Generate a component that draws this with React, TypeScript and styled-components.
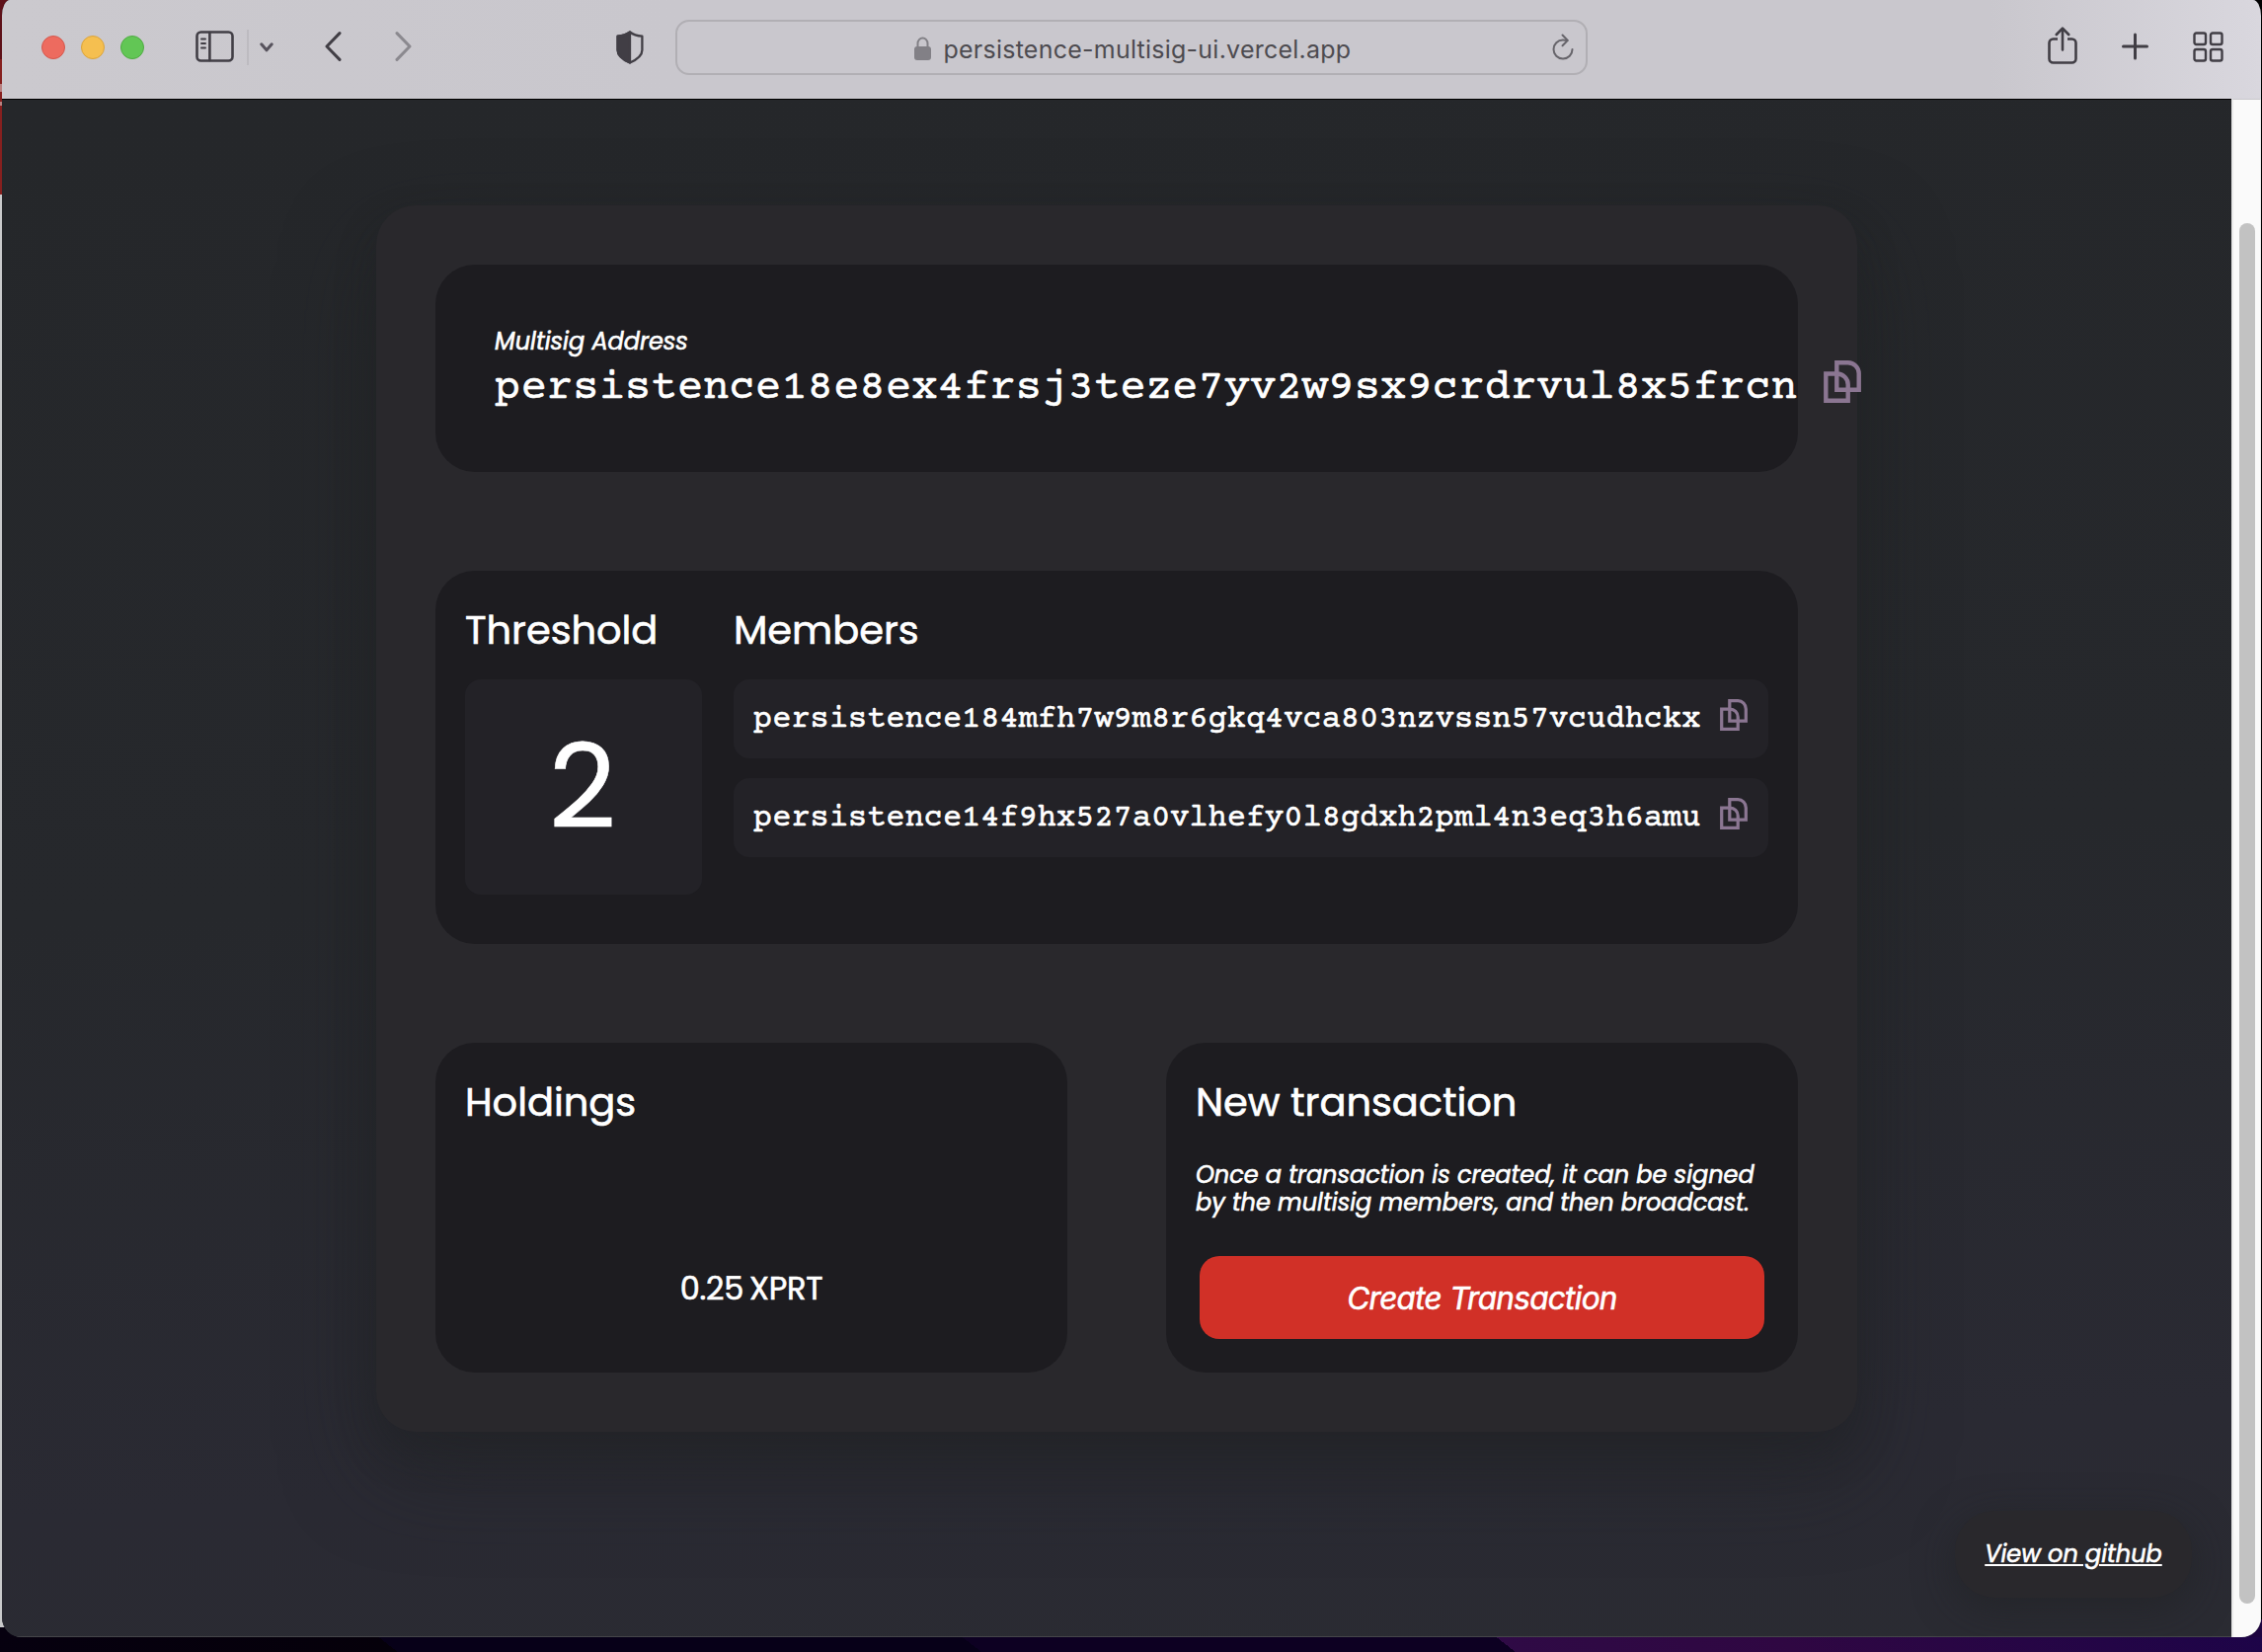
import React from "react";
import styled, { createGlobalStyle } from "styled-components";

const uiFont = `Poppins, Inter, "Open Sans", sans-serif`;
const systemFont = `Inter, Roboto, sans-serif`;
const monoFont = `"Courier Prime", "Liberation Mono", monospace`;

const GlobalStyle = createGlobalStyle`
  * { box-sizing: border-box; }
  body { margin: 0; background: #05000f; }
  h2, p { margin: 0; }
`;

const Desktop = styled.div`
  width: 2291px;
  height: 1673px;
  padding: 0 1px 15px 2px;
  overflow: hidden;
  background:
    linear-gradient(#5e1119 0 60px, #86201f 60px 85px, #b98080 85px 93px, #86201f 93px 103px, #b98080 103px 107px, #86201f 107px 197px, #c9cacb 197px) 0 0 / 20px 1648px no-repeat,
    linear-gradient(#000 0 100%) 100% 0 / 20px 1640px no-repeat,
    linear-gradient(38deg, #06000f 0, #05000a 248px, #070018 248px 612px, #0d0022 612px 945px, #2f0a45 945px, #2f0742 1120px, #1d0448 1422px) 0 100% / 2291px 15px no-repeat,
    linear-gradient(90deg, #06000f 50%, #1d0440 50%);
`;

const Window = styled.div`
  display: flex;
  flex-direction: column;
  height: 1658px;
  overflow: hidden;
  border-radius: 8px 8px 20px 20px / 16px 16px 20px 20px;
  background: #27282e;
`;

const Toolbar = styled.header`
  display: flex;
  align-items: center;
  flex: none;
  height: 100px;
  padding: 0 38px 4px 40px;
  background: linear-gradient(90deg, #cbc9ce 0, #c9c7cd 30%, #c9c7cd 88%, #d9d7de 100%);
`;

const TrafficLights = styled.div`
  display: flex;
  gap: 16px;
`;

const Light = styled.span<{ $fill: string; $edge: string }>`
  width: 24px;
  height: 24px;
  border-radius: 50%;
  border: 1px solid ${(p) => p.$edge};
  background: ${(p) => p.$fill};
`;

const Glyph = styled.svg<{ $before?: number; $lift?: number; $tone?: string }>`
  display: block;
  flex: none;
  margin-left: ${(p) => p.$before ?? 0}px;
  margin-bottom: ${(p) => p.$lift ?? 0}px;
  color: ${(p) => p.$tone ?? "#413e45"};
  fill: none;
  stroke: currentColor;
  stroke-linecap: round;
  stroke-linejoin: round;
`;

const Divider = styled.span`
  width: 2px;
  height: 36px;
  margin-left: 13px;
  background: #bdbbc0;
`;

const AddressBar = styled.div`
  display: flex;
  align-items: center;
  width: 924px;
  height: 56px;
  margin-left: 32px;
  padding: 2px 12px 0 240px;
  border: 2px solid #b1afb4;
  border-radius: 14px;
`;

const Url = styled.span`
  flex: 1;
  margin-left: 13px;
  padding-top: 2px;
  font: 400 25px/32px ${systemFont};
  letter-spacing: 0.24px;
  color: #4d4b50;
  white-space: nowrap;
`;

const ToolbarActions = styled.div`
  display: flex;
  align-items: center;
  gap: 45px;
  margin-left: auto;
`;

const Viewport = styled.div`
  position: relative;
  display: flex;
  flex: 1;
`;

const Page = styled.main`
  flex: 1;
  display: flex;
  justify-content: center;
  align-items: flex-start;
  padding-top: 107px;
  border-top: 1px solid #000;
  border-bottom: 1px solid #45464a;
  background: linear-gradient(177deg, #25272a 0%, #26282c 50%, #2a2a33 86%, #2a2b32 100%);
`;

const ScrollTrack = styled.div`
  width: 30px;
  padding: 125px 5px 34px 6px;
  border-top: 1px solid #c9c8cc;
  border-left: 2px solid #e9e9e9;
  border-right: 1px solid #ececec;
  background: #fafafa;
`;

const ScrollThumb = styled.div`
  width: 16px;
  height: 1398px;
  border-radius: 8px;
  background: #c2c2c2;
`;

const Board = styled.div`
  display: flex;
  flex-direction: column;
  gap: 100px;
  width: 1500px;
  height: 1242px;
  padding: 60px;
  border-radius: 40px;
  background: #29282c;
  box-shadow: 0 40px 90px rgba(33, 35, 37, 0.6), 0 20px 40px rgba(27, 29, 32, 0.3);
`;

const Card = styled.section<{ $height: number; $inset?: string }>`
  display: flex;
  flex-direction: column;
  flex: 1 1 0;
  min-width: 0;
  min-height: ${(p) => p.$height}px;
  padding: ${(p) => p.$inset ?? "30px"};
  border-radius: 40px;
  background: #1d1c20;
  color: #fff;
`;

const CardPair = styled.div`
  display: flex;
  gap: 100px;
`;

const Label = styled.p`
  font: italic 400 24px/36px ${uiFont};
  -webkit-text-stroke: 0.6px #fff;
  white-space: nowrap;
`;

const Heading = styled.h2`
  font: 400 40px/60px ${uiFont};
  letter-spacing: -0.07px;
  -webkit-text-stroke: 0.6px #fff;
  white-space: nowrap;
`;

const AddressLine = styled.div`
  display: flex;
  align-items: flex-start;
  gap: 27px;
  padding-top: 1px;
`;

const Mono = styled.span<{ $size: number; $drop?: number }>`
  margin-top: ${(p) => p.$drop ?? 0}px;
  font: 400 ${(p) => p.$size}px/50px ${monoFont};
  -webkit-text-stroke: 0.6px #fff;
  white-space: nowrap;
`;

const Signers = styled.div`
  display: flex;
  gap: 32px;
`;

const Column = styled.div<{ $width: number }>`
  display: flex;
  flex-direction: column;
  width: ${(p) => p.$width}px;
`;

const ThresholdBox = styled.div`
  display: flex;
  align-items: center;
  justify-content: center;
  height: 218px;
  margin-top: 20px;
  padding-right: 2px;
  border-radius: 16px;
  background: #232227;
  font: 400 119px/180px ${uiFont};
  -webkit-text-stroke: 0.6px #fff;
`;

const MemberList = styled.div`
  display: flex;
  flex-direction: column;
  gap: 20px;
  margin-top: 20px;
`;

const Member = styled.div`
  display: flex;
  align-items: flex-start;
  justify-content: space-between;
  height: 80px;
  padding: 16px 21px 0 20px;
  border-radius: 16px;
  background: #232227;
`;

const CopyGlyph = styled.svg<{ $drop?: number }>`
  flex: none;
  margin-top: ${(p) => p.$drop ?? 0}px;
`;

const Balance = styled.div`
  display: flex;
  justify-content: center;
  gap: 6px;
  margin-top: 135px;
  font: 400 32px/48px ${uiFont};
  letter-spacing: -0.25px;
  -webkit-text-stroke: 0.6px #fff;
`;

const Hint = styled.p`
  margin-top: 30px;
  font: italic 400 24px/28px ${uiFont};
  -webkit-text-stroke: 0.6px #fff;
  white-space: nowrap;
`;

const CreateButton = styled.button`
  height: 84px;
  margin: 40px 4px 0;
  padding: 1px 0 0;
  border: 0;
  border-radius: 20px;
  background: #d13027;
  color: #fff;
  font: italic 400 31.5px/40px ${systemFont};
  letter-spacing: -0.7px;
  -webkit-text-stroke: 0.6px #fff;
`;

const GithubLink = styled.a`
  position: absolute;
  right: 70px;
  bottom: 40px;
  display: flex;
  align-items: center;
  justify-content: center;
  width: 240px;
  height: 88px;
  border-radius: 40px;
  background: #29282c;
  box-shadow: 0 10px 40px rgba(31, 33, 34, 0.55);
  color: #fff;
  font: italic 400 24px/36px ${uiFont};
  -webkit-text-stroke: 0.6px #fff;
  text-decoration: underline;
  text-decoration-thickness: 2px;
  text-underline-offset: 2px;
  white-space: nowrap;
`;

const CopyIcon = ({ width, height, drop }: { width: number; height: number; drop?: number }) => (
  <CopyGlyph $drop={drop} width={width} height={height} viewBox="0 0 38 43" preserveAspectRatio="none" fill="none" stroke="#8b7692" strokeWidth="4.4">
    <path d="M13.3 2.300h11.400a11 11 0 0 1 11 11v16.400H13.300z" />
    <path d="M2.300 13.500h11.400a11 11 0 0 1 11 11v16.200H2.300z" />
  </CopyGlyph>
);

const members = [
  "persistence184mfh7w9m8r6gkq4vca803nzvssn57vcudhckx",
  "persistence14f9hx527a0vlhefy0l8gdxh2pml4n3eq3h6amu",
];

const BrowserToolbar = () => (
  <Toolbar>
    <TrafficLights>
      <Light $fill="#ed6b5f" $edge="#d5574c" />
      <Light $fill="#f5bf50" $edge="#dba33a" />
      <Light $fill="#62c655" $edge="#4eab41" />
    </TrafficLights>
    <Glyph $before={52} $lift={2} width="39" height="32" viewBox="0 0 39 32" strokeWidth="2.6">
      <rect x="1.5" y="1.5" width="36" height="29" rx="4" />
      <path d="M14.4 2v28" />
      <path d="M6 8.5h4M6 13h4M6 17.5h4" strokeWidth="1.9" />
    </Glyph>
    <Divider />
    <Glyph $before={11} $tone="#57535d" width="14" height="11" viewBox="0 0 14 11" strokeWidth="3">
      <path d="M1.8 1.8 7 7.8l5.200-6" />
    </Glyph>
    <Glyph $before={51.5} $lift={2} width="17" height="32" viewBox="0 0 17 32" strokeWidth="3">
      <path d="M15 2.600 2 16 15 29.400" />
    </Glyph>
    <Glyph $before={54.5} $lift={2} $tone="#8b898f" width="17" height="32" viewBox="0 0 17 32" strokeWidth="3">
      <path d="M2 2.600 15 16 2 29.400" />
    </Glyph>
    <Glyph $before={206.5} $lift={1} width="28" height="34" viewBox="0 0 28 34" strokeWidth="2.300">
      <path d="M14 1.500c3.500 2.800 7.500 3.900 12.400 4.200v14c0 5-4.400 9.200-12.400 12.800C6 28.900 1.600 24.700 1.600 19.700v-14C6.500 5.400 10.500 4.300 14 1.500z" />
      <path d="M14 1.500v31C6 28.900 1.600 24.700 1.600 19.700v-14C6.500 5.400 10.500 4.300 14 1.500z" fill="currentColor" />
    </Glyph>
    <AddressBar>
      <Glyph $tone="#828086" width="17" height="24" viewBox="0 0 17 24" strokeWidth="2">
        <rect x="1" y="11" width="15" height="12" rx="2" fill="currentColor" />
        <path d="M3.500 11V7a5 5.500 0 0 1 10 0v4" />
      </Glyph>
      <Url>persistence-multisig-ui.vercel.app</Url>
      <Glyph $tone="#66646a" $lift={3} width="22" height="27" viewBox="0 0 22 27" strokeWidth="2">
        <path d="M20.500 16a9.500 9.500 0 1 1-9.500-9.500c1.500 0 3 .2 4.500.6" />
        <path d="M10.500 1.500l5.300 5.400-5.300 5.300" />
      </Glyph>
    </AddressBar>
    <ToolbarActions>
      <Glyph $lift={5} width="30" height="38" viewBox="0 0 30 38" strokeWidth="2.600">
        <path d="M10 12.500H5.500a4 4 0 0 0-4 4v16a4 4 0 0 0 4 4h19a4 4 0 0 0 4-4v-16a4 4 0 0 0-4-4H20" strokeLinecap="butt" />
        <path d="M15 23.500V2M8.800 8 15 1.600 21.200 8" />
      </Glyph>
      <Glyph $lift={3} width="27" height="28" viewBox="0 0 27 28" strokeWidth="3">
        <path d="M13.500 2v24M1.500 14h24" />
      </Glyph>
      <Glyph $before={0.5} $lift={2} width="31" height="31" viewBox="0 0 31 31" strokeWidth="2.400">
        <rect x="1.500" y="1.500" width="11.500" height="11.500" rx="2" />
        <rect x="18" y="1.500" width="11.500" height="11.500" rx="2" />
        <rect x="1.500" y="18" width="11.500" height="11.500" rx="2" />
        <rect x="18" y="18" width="11.500" height="11.500" rx="2" />
      </Glyph>
    </ToolbarActions>
  </Toolbar>
);

export default function App() {
  return (
    <Desktop>
      <GlobalStyle />
      <Window>
        <BrowserToolbar />
        <Viewport>
          <Page>
            <Board>
              <Card $height={210} $inset="60px">
                <Label>Multisig Address</Label>
                <AddressLine>
                  <Mono $size={44} $drop={4}>persistence18e8ex4frsj3teze7yv2w9sx9crdrvul8x5frcn</Mono>
                  <CopyIcon width={38} height={43} />
                </AddressLine>
              </Card>
              <Card $height={378}>
                <Signers>
                  <Column $width={240}>
                    <Heading>Threshold</Heading>
                    <ThresholdBox>2</ThresholdBox>
                  </Column>
                  <Column $width={1048}>
                    <Heading>Members</Heading>
                    <MemberList>
                      {members.map((address) => (
                        <Member key={address}>
                          <Mono $size={32}>{address}</Mono>
                          <CopyIcon width={28} height={32} drop={4} />
                        </Member>
                      ))}
                    </MemberList>
                  </Column>
                </Signers>
              </Card>
              <CardPair>
                <Card $height={334}>
                  <Heading>Holdings</Heading>
                  <Balance>
                    <span>0.25</span>
                    <span>XPRT</span>
                  </Balance>
                </Card>
                <Card $height={334}>
                  <Heading>New transaction</Heading>
                  <Hint>
                    Once a transaction is created, it can be signed
                    <br />
                    by the multisig members, and then broadcast.
                  </Hint>
                  <CreateButton>Create Transaction</CreateButton>
                </Card>
              </CardPair>
            </Board>
          </Page>
          <ScrollTrack>
            <ScrollThumb />
          </ScrollTrack>
          <GithubLink>View on github</GithubLink>
        </Viewport>
      </Window>
    </Desktop>
  );
}
